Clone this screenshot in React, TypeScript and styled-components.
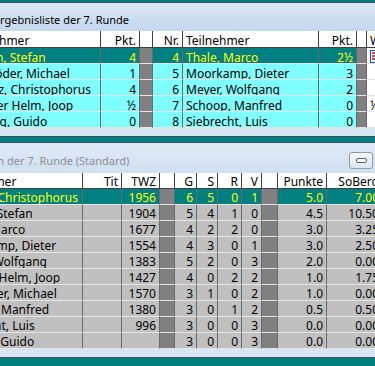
import React from "react";
import styled, { createGlobalStyle } from "styled-components";

const GlobalStyle = createGlobalStyle`
  html, body { margin: 0; padding: 0; background: #008080; }
  #root { width: 375px; height: 366px; }
`;

type Kind = "text" | "gray" | "white";
type Align = "left" | "right";
interface ColDef {
  w: number;
  align: Align;
  kind: Kind;
}
type Tone = "header" | "normal" | "selected";

const Desktop = styled.div`
  width: 375px;
  height: 366px;
  overflow: hidden;
  box-sizing: border-box;
  padding-top: 2px;
  background: #007f7f;
  display: flex;
  flex-direction: column;
  gap: 5px;
  font-family: "Noto Sans", "Liberation Sans", sans-serif;
`;

const Window = styled.div<{ $shift: number; $w: number }>`
  flex: none;
  margin-left: ${(p) => -p.$shift}px;
  width: ${(p) => p.$w}px;
  border: 1px solid #3f4e5a;
  background: #d9e5f2;
  display: flex;
  flex-direction: column;
  padding-bottom: 8px;
`;

const TitleBar = styled.div<{ $h: number; $active: boolean }>`
  height: ${(p) => p.$h}px;
  box-sizing: border-box;
  padding: 5px 6px 0 0;
  display: flex;
  align-items: center;
  gap: 2px;
  background: ${(p) =>
    p.$active ? "linear-gradient(#dae7f5, #c5d7ed)" : "linear-gradient(#e1ebf6, #d0deee)"};
  overflow: hidden;
`;

const Title = styled.span<{ $active: boolean; $indent: number }>`
  flex: 1;
  margin-left: ${(p) => p.$indent}px;
  font-size: 11px;
  white-space: nowrap;
  color: ${(p) => (p.$active ? "#000000" : "#8c9096")};
`;

const CaptionButton = styled.div<{ $w: number }>`
  flex: none;
  width: ${(p) => p.$w}px;
  height: 17px;
  box-sizing: border-box;
  border: 1px solid #8e9cab;
  border-radius: 3px;
  background: linear-gradient(#f6f9fc, #dce5ef);
  display: flex;
  align-items: center;
  justify-content: center;
`;

const Grid = styled.div`
  display: flex;
  flex-direction: column;
`;

const Row = styled.div<{ $cols: string; $h: number }>`
  display: grid;
  grid-template-columns: ${(p) => p.$cols};
  height: ${(p) => p.$h}px;
`;

const bgFor = (tone: Tone, kind: Kind, base: string) => {
  if (tone === "header") return "#ffffff";
  if (kind === "gray") return "#808080";
  if (kind === "white") return "#ffffff";
  if (tone === "selected") return "#008080";
  return base;
};

const fgFor = (tone: Tone, kind: Kind) => {
  if (tone === "selected" && kind === "text") return "#ffff00";
  return "#000000";
};

const Cell = styled.div<{ $align: Align; $tone: Tone; $kind: Kind; $base: string; $pad: number }>`
  box-sizing: border-box;
  padding: ${(p) => p.$pad}px 3px 0 3px;
  border-right: 1px solid ${(p) => (p.$tone === "header" ? "#404040" : "#6a6a6a")};
  border-bottom: 1px solid ${(p) => (p.$tone === "header" ? "#404040" : "#e4e4e4")};
  background: ${(p) => bgFor(p.$tone, p.$kind, p.$base)};
  color: ${(p) => fgFor(p.$tone, p.$kind)};
  text-align: ${(p) => p.$align};
  font-size: 12px;
  line-height: 15px;
  white-space: nowrap;
  overflow: hidden;
`;

const EditIcon = () => (
  <svg width="9" height="13" viewBox="0 0 9 13">
    <rect x="0.5" y="0.5" width="9" height="12" fill="#e8f4ff" stroke="#1a4fd0" />
    <path d="M2 3h5M2 6h5M2 9h5" stroke="#d01010" strokeWidth="1.5" />
  </svg>
);

const MinimizeGlyph = () => (
  <svg width="11" height="5" viewBox="0 0 11 5">
    <rect x="0.5" y="0.5" width="10" height="4" rx="1.5" fill="#ffffff" stroke="#5a6470" />
  </svg>
);

interface TableProps {
  cols: ColDef[];
  header: string[];
  rows: { sel?: boolean; cells: React.ReactNode[] }[];
  base: string;
  headerH: number;
  pad: number;
}

function Table({ cols, header, rows, base, headerH, pad }: TableProps) {
  const template = cols.map((c) => `${c.w}px`).join(" ");
  return (
    <Grid>
      <Row $cols={template} $h={headerH}>
        {header.map((h, i) => (
          <Cell key={i} $align={cols[i].align} $tone="header" $kind={cols[i].kind} $base={base} $pad={pad}>
            {h}
          </Cell>
        ))}
      </Row>
      {rows.map((r, ri) => (
        <Row key={ri} $cols={template} $h={16}>
          {r.cells.map((c, i) => (
            <Cell
              key={i}
              $align={cols[i].align}
              $tone={r.sel ? "selected" : "normal"}
              $kind={cols[i].kind}
              $base={base}
              $pad={pad}
            >
              {c}
            </Cell>
          ))}
        </Row>
      ))}
    </Grid>
  );
}

const TOP_COLS: ColDef[] = [
  { w: 138, align: "left", kind: "text" },
  { w: 39, align: "right", kind: "text" },
  { w: 13, align: "left", kind: "gray" },
  { w: 30, align: "right", kind: "text" },
  { w: 136, align: "left", kind: "text" },
  { w: 38, align: "right", kind: "text" },
  { w: 10, align: "left", kind: "gray" },
  { w: 90, align: "left", kind: "white" },
];

const TOP_HEADER = ["Teilnehmer", "Pkt.", "", "Nr.", "Teilnehmer", "Pkt.", "", "Wertung"];

const TOP_ROWS = [
  { sel: true, cells: ["Jansen, Stefan", "4", "", "4", "Thale, Marco", "2½", "", <EditIcon key="i" />] },
  { cells: ["Schwöder, Michael", "1", "", "5", "Moorkamp, Dieter", "3", "", ""] },
  { cells: ["Lorenz, Christophorus", "4", "", "6", "Meyer, Wolfgang", "2", "", ""] },
  { cells: ["van der Helm, Joop", "½", "", "7", "Schoop, Manfred", "0", "", "½ - ½"] },
  { cells: ["Ludwig, Guido", "0", "", "8", "Siebrecht, Luis", "0", "", ""] },
];

const BOTTOM_COLS: ColDef[] = [
  { w: 133, align: "left", kind: "text" },
  { w: 39, align: "right", kind: "text" },
  { w: 38, align: "right", kind: "text" },
  { w: 15, align: "left", kind: "gray" },
  { w: 22, align: "right", kind: "text" },
  { w: 21, align: "right", kind: "text" },
  { w: 24, align: "right", kind: "text" },
  { w: 20, align: "right", kind: "text" },
  { w: 16, align: "left", kind: "gray" },
  { w: 49, align: "right", kind: "text" },
  { w: 56, align: "right", kind: "text" },
  { w: 60, align: "right", kind: "text" },
];

const BOTTOM_HEADER = ["Teilnehmer", "Tit", "TWZ", "", "G", "S", "R", "V", "", "Punkte", "SoBerg", "Buchh"];

const STANDINGS: [string, string, string, string, string, string, string, string][] = [
  ["Lorenz, Christophorus", "1956", "6", "5", "0", "1", "5.0", "7.00"],
  ["Jansen, Stefan", "1904", "5", "4", "1", "0", "4.5", "10.50"],
  ["Thale, Marco", "1677", "4", "2", "2", "0", "3.0", "3.25"],
  ["Moorkamp, Dieter", "1554", "4", "3", "0", "1", "3.0", "2.50"],
  ["Meyer, Wolfgang", "1383", "5", "2", "0", "3", "2.0", "0.00"],
  ["van der Helm, Joop", "1427", "4", "0", "2", "2", "1.0", "1.75"],
  ["Schwöder, Michael", "1570", "3", "1", "0", "2", "1.0", "0.00"],
  ["Schoop, Manfred", "1380", "3", "0", "1", "2", "0.5", "0.50"],
  ["Siebrecht, Luis", "996", "3", "0", "0", "3", "0.0", "0.00"],
  ["Ludwig, Guido", "", "3", "0", "0", "3", "0.0", "0.00"],
];

const BOTTOM_ROWS = STANDINGS.map((s, i) => ({
  sel: i === 0,
  cells: [s[0], "", s[1], "", s[2], s[3], s[4], s[5], "", s[6], s[7], ""],
}));

export default function App() {
  return (
    <>
      <GlobalStyle />
      <Desktop>
        <Window $shift={38} $w={547}>
          <TitleBar $h={28} $active>
            <Title $active $indent={31}>
              Ergebnisliste der 7. Runde
            </Title>
          </TitleBar>
          <Table cols={TOP_COLS} header={TOP_HEADER} rows={TOP_ROWS} base="#80ffff" headerH={17} pad={2} />
        </Window>
        <Window $shift={51} $w={501}>
          <TitleBar $h={30} $active={false}>
            <Title $active={false} $indent={-10}>
              Tabelle nach der 7. Runde (Standard)
            </Title>
            <CaptionButton $w={24}>
              <MinimizeGlyph />
            </CaptionButton>
            <CaptionButton $w={25} />
            <CaptionButton $w={43} />
          </TitleBar>
          <Table cols={BOTTOM_COLS} header={BOTTOM_HEADER} rows={BOTTOM_ROWS} base="#c0c0c0" headerH={16} pad={1} />
        </Window>
      </Desktop>
    </>
  );
}
